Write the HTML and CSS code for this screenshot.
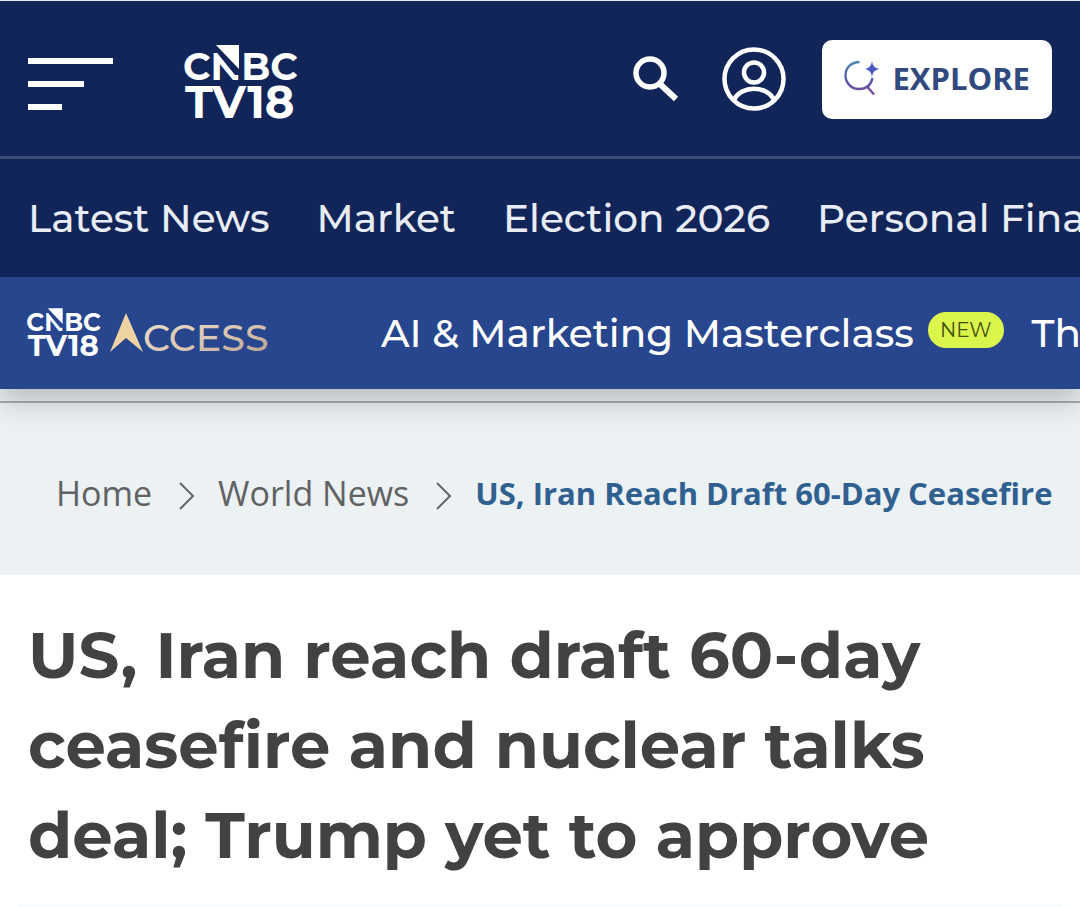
FILE: index.html
```html
<!DOCTYPE html>
<html lang="en">
<head>
    <meta charset="UTF-8">
    <meta name="viewport" content="width=device-width, initial-scale=1.0">
    <title>US, Iran reach draft 60-day ceasefire and nuclear talks deal</title>
    <link rel="stylesheet" href="styles.css">
</head>
<body>
    <header class="site-header">
        <div class="top-bar">
            <button type="button" class="icon-btn menu-btn" aria-label="Menu">
                <span></span>
                <span></span>
                <span></span>
            </button>
            <a href="#" class="logo" aria-label="CNBC TV18">
                <svg width="114" height="76" viewBox="0 0 114 76">
                    <text class="logo-top" x="-1" y="35">CNBC</text>
                    <path class="logo-cut" d="M30 1 H57 V30 L51 30 L34 9 Z"/>
                    <path class="logo-flag" d="M32 0 H55 V24 Z"/>
                    <text class="logo-bottom" x="1" y="73">TV18</text>
                </svg>
            </a>
            <div class="actions">
                <button type="button" class="icon-btn" aria-label="Search">
                    <svg width="48" height="48" viewBox="0 0 48 48" fill="none" stroke="#fff">
                        <circle cx="19" cy="18" r="14" stroke-width="5.5"/>
                        <path d="M29 29 L45 44" stroke-width="6"/>
                    </svg>
                </button>
                <button type="button" class="icon-btn" aria-label="Account">
                    <svg width="64" height="64" viewBox="0 0 64 64" fill="none" stroke="#fff" stroke-width="4.5">
                        <circle cx="32" cy="32" r="29.5"/>
                        <circle cx="32" cy="25.500" r="10"/>
                        <path d="M12 53 C19 38 45 38 52 53"/>
                    </svg>
                </button>
                <button type="button" class="explore-btn">
                    <svg width="36" height="36" viewBox="0 0 36 36" fill="none">
                        <defs>
                            <linearGradient id="ringFill" x1="0" y1="0" x2="0" y2="1">
                                <stop offset="0" stop-color="#4a86b4"/>
                                <stop offset="0.6" stop-color="#5a55a8"/>
                                <stop offset="1" stop-color="#7a4a9c"/>
                            </linearGradient>
                        </defs>
                        <path d="M15.500 2 C7 2 1.500 8 1.500 15.500 C1.500 23 7.500 29 15 29 C22 29 27 25 28.500 18 M23.500 27 L30 34.500" stroke="url(#ringFill)" stroke-width="2.400"/>
                        <path d="M28 1 C29 6 30 7.500 35.500 9 C30 10.500 29 12 28 17 C27 12 26 10.500 21 9 C26 7.500 27 6 28 1 Z" fill="#4d57c0"/>
                    </svg>
                    EXPLORE
                </button>
            </div>
        </div>
        <nav class="main-nav" aria-label="Main">
            <a href="#">Latest News</a>
            <a href="#">Market</a>
            <a href="#">Election 2026</a>
            <a href="#">Personal Finance</a>
        </nav>
        <nav class="access-bar" aria-label="Access">
            <a href="#" class="access-logo" aria-label="CNBC TV18 Access">
                <svg width="74" height="50" viewBox="0 0 114 76">
                    <text class="logo-top" x="-1" y="35">CNBC</text>
                    <path class="logo-cut" d="M30 1 H57 V30 L51 30 L34 9 Z"/>
                    <path class="logo-flag" d="M32 0 H55 V24 Z"/>
                    <text class="logo-bottom" x="1" y="73">TV18</text>
                </svg>
                <svg width="160" height="50" viewBox="0 0 160 50">
                    <defs>
                        <linearGradient id="gold" x1="0" y1="0" x2="1" y2="1">
                            <stop offset="0" stop-color="#f0e2cc"/>
                            <stop offset="0.5" stop-color="#dcc8b4"/>
                            <stop offset="1" stop-color="#b59c8c"/>
                        </linearGradient>
                    </defs>
                    <!-- arrowhead that opens the wordmark -->
                    <path d="M17 5 L34 44 L17 30 L1 44 Z" fill="#efd3a2"/>
                    <text class="access-word" x="34" y="43" fill="url(#gold)">CCESS</text>
                </svg>
            </a>
            <a href="#" class="access-link">AI &amp; Marketing Masterclass <span class="badge">NEW</span></a>
            <a href="#" class="access-link">The Summit</a>
        </nav>
    </header>

    <main>
        <div class="breadcrumb-wrap">
            <nav class="breadcrumb" aria-label="Breadcrumb">
                <a href="#">Home</a>
                <svg width="16" height="28" viewBox="0 0 16 28" fill="none" stroke="#666" stroke-width="2">
                    <path d="M1 1 L14 14 L1 27"/>
                </svg>
                <a href="#">World News</a>
                <svg width="16" height="28" viewBox="0 0 16 28" fill="none" stroke="#666" stroke-width="2">
                    <path d="M1 1 L14 14 L1 27"/>
                </svg>
                <span class="current">US, Iran Reach Draft 60-Day Ceasefire</span>
            </nav>
        </div>
        <article class="story">
            <h1>US, Iran reach draft 60-day ceasefire and nuclear talks deal; Trump yet to approve</h1>
        </article>
    </main>
</body>
</html>
```

FILE: styles.css
```css
* {
    box-sizing: border-box;
}

body {
    margin: 0;
    background-color: #fff;
    font-family: 'Open Sans', sans-serif;
    overflow-x: hidden;
}

a {
    color: inherit;
    text-decoration: none;
}

.site-header {
    position: relative;
    box-shadow: 0 10px 30px rgba(0, 0, 0, 0.25);
    color: #fff;
}

.top-bar {
    display: flex;
    align-items: center;
    height: 159px;
    padding: 1px 28px 0;
    background-color: #122558;
    border-top: 1px solid #e4eaf4;
    border-bottom: 3px solid #3d4c79;
}

.icon-btn {
    display: flex;
    padding: 0;
    border: none;
    background: none;
    cursor: pointer;
}

.menu-btn {
    flex-direction: column;
    gap: 17px;
    width: 85px;
    margin-right: 71px;
    padding-top: 10px;
}

.menu-btn span {
    width: 100%;
    height: 6px;
    background-color: #fff;
}

.menu-btn span:nth-child(2) {
    width: 66%;
}

.menu-btn span:nth-child(3) {
    width: 40%;
}

.logo {
    display: flex;
    padding-top: 8px;
}

.logo svg,
.access-logo svg {
    overflow: visible;
}

.logo-top,
.logo-bottom {
    font-family: Montserrat, sans-serif;
    font-weight: 700;
    fill: #fff;
}

.logo-top {
    font-size: 38px;
}

.logo-bottom {
    font-size: 45px;
}

.logo-cut {
    fill: #122558;
}

.access-logo .logo-cut {
    fill: #28468e;
}

.logo-flag {
    fill: #fff;
}

.actions {
    display: flex;
    align-items: center;
    margin-left: auto;
}

.actions .icon-btn {
    margin-right: 36px;
}

.actions .icon-btn:first-child {
    margin-right: 43px;
}

.explore-btn {
    display: flex;
    align-items: center;
    gap: 12px;
    height: 79px;
    padding: 0 22px 2px;
    border: none;
    border-radius: 10px;
    background-color: #fff;
    color: #30497f;
    font-family: 'Open Sans', sans-serif;
    font-size: 31px;
    font-weight: 700;
    cursor: pointer;
}

.main-nav {
    display: flex;
    align-items: center;
    gap: 47px;
    height: 118px;
    padding-left: 28px;
    background-color: #122558;
    color: #e8ecf5;
    font-family: Montserrat, sans-serif;
    font-size: 39px;
    font-weight: 500;
    white-space: nowrap;
    overflow: hidden;
}

.access-bar {
    display: flex;
    align-items: center;
    gap: 28px;
    height: 112px;
    padding-left: 27px;
    background-color: #28468e;
    font-family: Montserrat, sans-serif;
    font-size: 39px;
    font-weight: 500;
    white-space: nowrap;
    overflow: hidden;
}

.access-logo {
    display: flex;
    flex-shrink: 0;
    gap: 8px;
    margin-right: 84px;
}

.access-word {
    font-family: Montserrat, sans-serif;
    font-size: 38px;
    font-weight: 500;
}

.access-link {
    display: flex;
    align-items: center;
    gap: 14px;
}

.badge {
    margin-bottom: 6px;
    padding: 0 12px;
    border-radius: 18px;
    background-color: #dcf54c;
    color: #45500f;
    font-size: 20px;
    font-weight: 400;
    line-height: 36px;
}

.breadcrumb-wrap {
    padding-top: 12px;
    background-color: #ecf1f4;
}

.breadcrumb {
    display: flex;
    align-items: center;
    height: 174px;
    padding: 8px 28px 0 56px;
    border-top: 2px solid #a8abaf;
    color: #606263;
    font-size: 34px;
    white-space: nowrap;
}

.breadcrumb svg {
    flex-shrink: 0;
    margin: 6px 23px 0 27px;
}

.breadcrumb .current {
    color: #2f6090;
    font-size: 31px;
    font-weight: 700;
}

.story {
    margin: 0 18px;
    padding: 35px 10px 25px;
    border-bottom: 2px solid #f8fcfe;
}

.story h1 {
    max-width: 960px;
    margin: 0;
    color: #424242;
    font-family: Montserrat, sans-serif;
    font-size: 64px;
    font-weight: 700;
    line-height: 90px;
}
```
